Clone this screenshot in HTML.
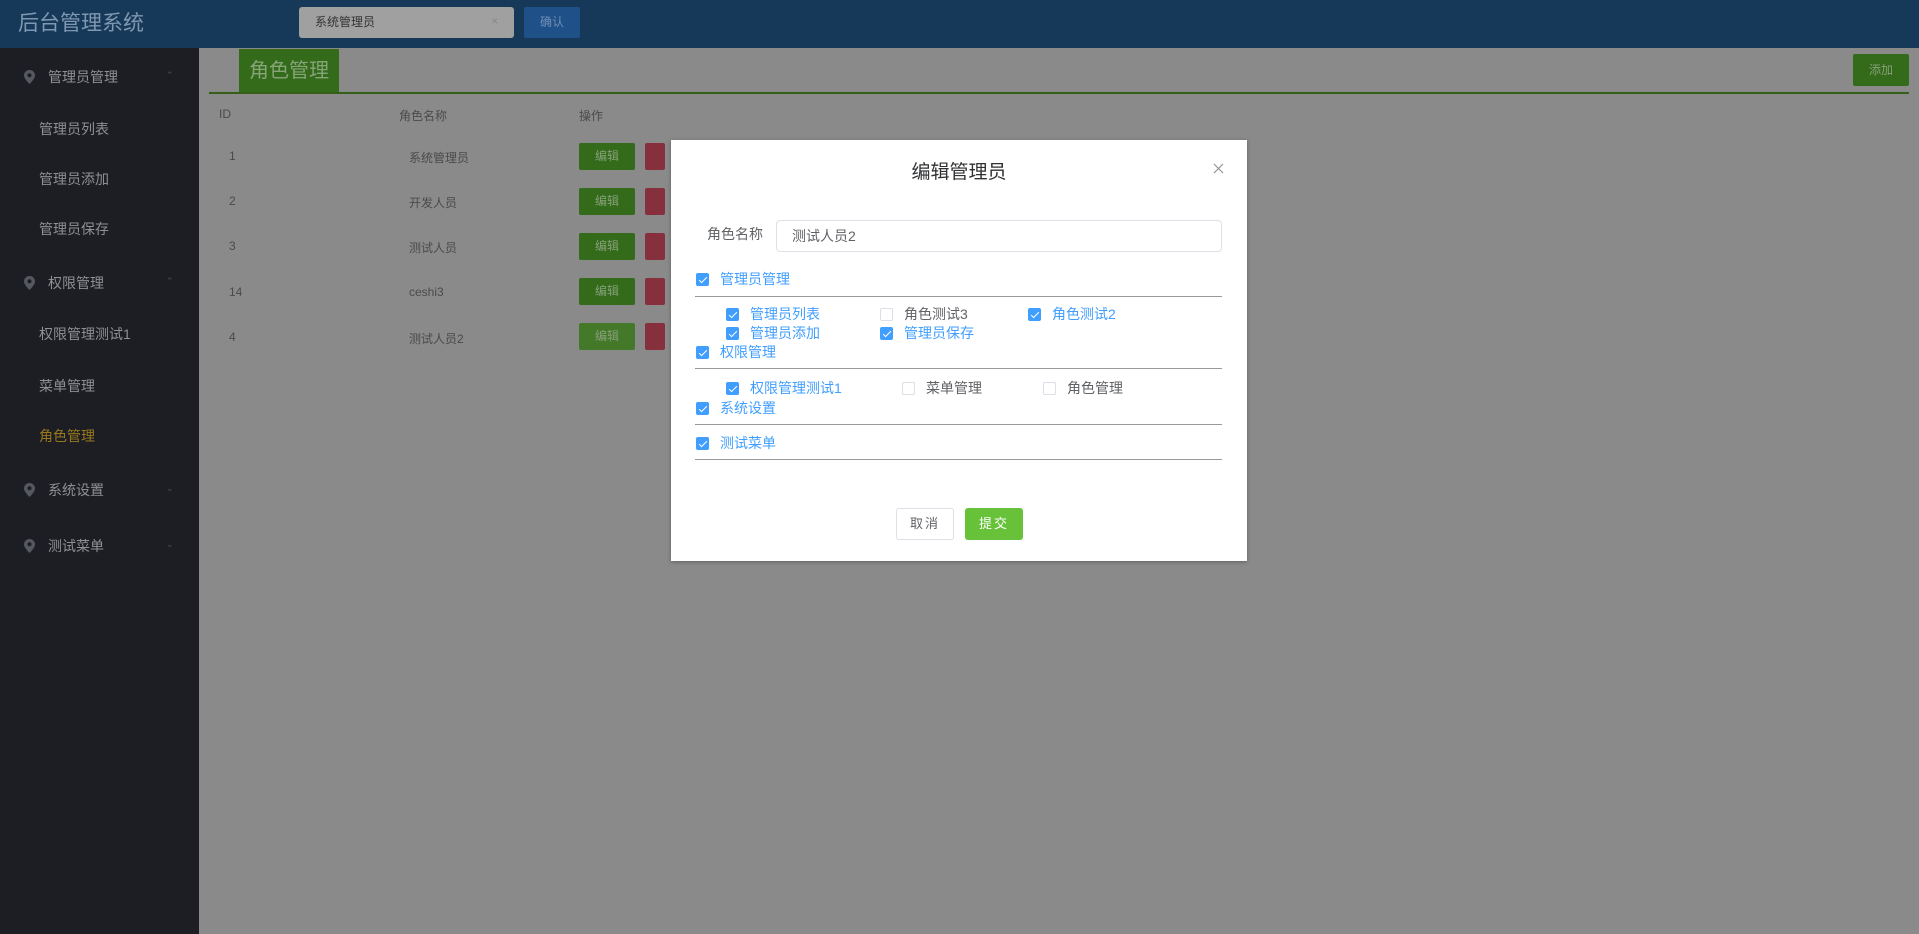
<!DOCTYPE html>
<html><head><meta charset="utf-8"><style>
*{margin:0;padding:0;box-sizing:border-box}
body{width:1919px;height:934px;overflow:hidden;background:#8a8a8a;font-family:"Liberation Sans","Noto Sans CJK SC",sans-serif;position:relative}
.a{position:absolute;white-space:nowrap}
.hdr{left:0;top:0;width:1919px;height:48px;background:#16395a}
.side{left:0;top:48px;width:199px;height:886px;background:#1c1e24}
.si{color:#8e9094;font-size:14px;line-height:20px}
.btn{height:27px;width:56px;border-radius:2px;color:#86a078;font-size:12px;text-align:center;line-height:27px}
.g{background:#336b1a}
.r{background:#86303e;width:20px}
.tc{color:#4a4a4a;font-size:12px}
.modal{left:671px;top:140px;width:576px;height:421px;background:#fff;box-shadow:0 1px 4px rgba(0,0,0,.3)}
.cb{width:13px;height:13px;border-radius:2px;background:#409eff;border:1px solid #409eff}
.cb::after{content:"";position:absolute;left:3.5px;top:0.5px;width:3px;height:7px;border:solid #fff;border-width:0 1.5px 1.5px 0;transform:rotate(45deg)}
.ub{width:13px;height:13px;border-radius:2px;background:#fff;border:1px solid #dcdfe6}
.bl{color:#409eff;font-size:14px;line-height:16px}
.gr{color:#606266;font-size:14px;line-height:16px}
.ln{height:1px;background:#999;left:695px;width:527px}
</style></head><body>
<div class="a hdr"></div>
<div class="a" style="left:18px;top:10px;color:#7f97b0;font-size:21px;line-height:28px">后台管理系统</div>
<div class="a" style="left:299px;top:7px;width:215px;height:31px;background:#a0a0a0;border-radius:3px"></div>
<div class="a" style="left:315px;top:14px;color:#333;font-size:12px;line-height:16px">系统管理员</div>
<div class="a" style="left:491px;top:16px;color:#888;font-size:9px">✕</div>
<div class="a" style="left:524px;top:7px;width:56px;height:31px;background:#1f5088;border-radius:2px;color:#6f8fb6;font-size:12px;text-align:center;line-height:31px">确认</div>
<div class="a side"></div>
<svg class="a" style="left:24px;top:70px" width="11" height="14" viewBox="0 0 11 14"><path d="M5.5 0C2.5 0 0 2.4 0 5.4 0 9 5.5 14 5.5 14S11 9 11 5.4C11 2.4 8.5 0 5.5 0Z" fill="#55585e"/><circle cx="5.5" cy="5.3" r="2" fill="#1c1e24"/></svg>
<div class="a si" style="left:48px;top:67px">管理员管理</div>
<div class="a" style="left:166px;top:70px;color:#4a4d52;font-size:9px">⌃</div>
<div class="a si" style="left:39px;top:119px">管理员列表</div>
<div class="a si" style="left:39px;top:169px">管理员添加</div>
<div class="a si" style="left:39px;top:219px">管理员保存</div>
<svg class="a" style="left:24px;top:276px" width="11" height="14" viewBox="0 0 11 14"><path d="M5.5 0C2.5 0 0 2.4 0 5.4 0 9 5.5 14 5.5 14S11 9 11 5.4C11 2.4 8.5 0 5.5 0Z" fill="#55585e"/><circle cx="5.5" cy="5.3" r="2" fill="#1c1e24"/></svg>
<div class="a si" style="left:48px;top:273px">权限管理</div>
<div class="a" style="left:166px;top:276px;color:#4a4d52;font-size:9px">⌃</div>
<div class="a si" style="left:39px;top:324px">权限管理测试1</div>
<div class="a si" style="left:39px;top:376px">菜单管理</div>
<div class="a si" style="left:39px;top:426px;color:#98781c">角色管理</div>
<svg class="a" style="left:24px;top:483px" width="11" height="14" viewBox="0 0 11 14"><path d="M5.5 0C2.5 0 0 2.4 0 5.4 0 9 5.5 14 5.5 14S11 9 11 5.4C11 2.4 8.5 0 5.5 0Z" fill="#55585e"/><circle cx="5.5" cy="5.3" r="2" fill="#1c1e24"/></svg>
<div class="a si" style="left:48px;top:480px">系统设置</div>
<div class="a" style="left:166px;top:483px;color:#4a4d52;font-size:9px">⌄</div>
<svg class="a" style="left:24px;top:539px" width="11" height="14" viewBox="0 0 11 14"><path d="M5.5 0C2.5 0 0 2.4 0 5.4 0 9 5.5 14 5.5 14S11 9 11 5.4C11 2.4 8.5 0 5.5 0Z" fill="#55585e"/><circle cx="5.5" cy="5.3" r="2" fill="#1c1e24"/></svg>
<div class="a si" style="left:48px;top:536px">测试菜单</div>
<div class="a" style="left:166px;top:539px;color:#4a4d52;font-size:9px">⌄</div>

<div class="a" style="left:239px;top:49px;width:100px;height:44px;background:#336b1a;color:#86a478;font-size:20px;text-align:center;line-height:44px">角色管理</div>
<div class="a" style="left:209px;top:92px;width:1700px;height:2px;background:#355e18"></div>
<div class="a" style="left:1853px;top:54px;width:56px;height:32px;background:#336b1a;border-radius:2px;color:#86a078;font-size:12px;text-align:center;line-height:32px">添加</div>
<div class="a tc" style="left:219px;top:107px">ID</div>
<div class="a tc" style="left:399px;top:107px">角色名称</div>
<div class="a tc" style="left:579px;top:107px">操作</div>
<div class="a tc" style="left:229px;top:149px">1</div><div class="a tc" style="left:409px;top:149px">系统管理员</div>
<div class="a tc" style="left:229px;top:194px">2</div><div class="a tc" style="left:409px;top:194px">开发人员</div>
<div class="a tc" style="left:229px;top:239px">3</div><div class="a tc" style="left:409px;top:239px">测试人员</div>
<div class="a tc" style="left:229px;top:285px">14</div><div class="a tc" style="left:409px;top:285px">ceshi3</div>
<div class="a tc" style="left:229px;top:330px">4</div><div class="a tc" style="left:409px;top:330px">测试人员2</div>
<div class="a btn g" style="left:579px;top:143px">编辑</div><div class="a btn r" style="left:645px;top:143px"></div>
<div class="a btn g" style="left:579px;top:188px">编辑</div><div class="a btn r" style="left:645px;top:188px"></div>
<div class="a btn g" style="left:579px;top:233px">编辑</div><div class="a btn r" style="left:645px;top:233px"></div>
<div class="a btn g" style="left:579px;top:278px">编辑</div><div class="a btn r" style="left:645px;top:278px"></div>
<div class="a btn g" style="left:579px;top:323px;background:#44792a">编辑</div><div class="a btn r" style="left:645px;top:323px"></div>

<div class="a modal"></div>
<div class="a" style="left:671px;top:160px;width:576px;text-align:center;color:#303133;font-size:19px;line-height:26px">编辑管理员</div>
<svg class="a" style="left:1213px;top:163px" width="11" height="11" viewBox="0 0 11 11"><path d="M1 1L10 10M10 1L1 10" stroke="#909399" stroke-width="1.2"/></svg>
<div class="a gr" style="left:707px;top:226px">角色名称</div>
<div class="a" style="left:776px;top:220px;width:446px;height:32px;border:1px solid #dcdfe6;border-radius:4px"></div>
<div class="a gr" style="left:792px;top:228px">测试人员2</div>

<div class="a cb" style="left:696px;top:273px"></div><div class="a bl" style="left:720px;top:271px">管理员管理</div>
<div class="a ln" style="top:296px"></div>
<div class="a cb" style="left:726px;top:308px"></div><div class="a bl" style="left:750px;top:306px">管理员列表</div>
<div class="a ub" style="left:880px;top:308px"></div><div class="a gr" style="left:904px;top:306px">角色测试3</div>
<div class="a cb" style="left:1028px;top:308px"></div><div class="a bl" style="left:1052px;top:306px">角色测试2</div>
<div class="a cb" style="left:726px;top:327px"></div><div class="a bl" style="left:750px;top:325px">管理员添加</div>
<div class="a cb" style="left:880px;top:327px"></div><div class="a bl" style="left:904px;top:325px">管理员保存</div>
<div class="a cb" style="left:696px;top:346px"></div><div class="a bl" style="left:720px;top:344px">权限管理</div>
<div class="a ln" style="top:368px"></div>
<div class="a cb" style="left:726px;top:382px"></div><div class="a bl" style="left:750px;top:380px">权限管理测试1</div>
<div class="a ub" style="left:902px;top:382px"></div><div class="a gr" style="left:926px;top:380px">菜单管理</div>
<div class="a ub" style="left:1043px;top:382px"></div><div class="a gr" style="left:1067px;top:380px">角色管理</div>
<div class="a cb" style="left:696px;top:402px"></div><div class="a bl" style="left:720px;top:400px">系统设置</div>
<div class="a ln" style="top:424px"></div>
<div class="a cb" style="left:696px;top:437px"></div><div class="a bl" style="left:720px;top:435px">测试菜单</div>
<div class="a ln" style="top:459px"></div>

<div class="a" style="left:896px;top:508px;width:58px;height:32px;border:1px solid #dcdfe6;border-radius:3px;color:#606266;font-size:13px;text-align:center;line-height:30px;letter-spacing:2px">取消</div>
<div class="a" style="left:965px;top:508px;width:58px;height:32px;background:#67c23a;border-radius:3px;color:#fff;font-size:13px;text-align:center;line-height:32px;letter-spacing:2px">提交</div>
</body></html>
